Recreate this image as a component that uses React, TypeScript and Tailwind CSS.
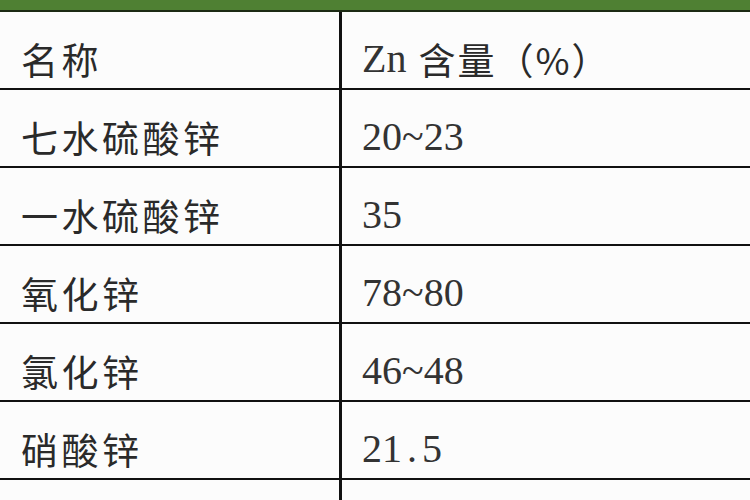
import * as React from 'react'

type Row = { name: string; value: React.ReactNode }

const rows: Row[] = [
  { name: '七水硫酸锌', value: '20~23' },
  { name: '一水硫酸锌', value: '35' },
  { name: '氧化锌', value: '78~80' },
  { name: '氯化锌', value: '46~48' },
  {
    name: '硝酸锌',
    value: (
      <>
        21<span className="inline-block w-[0.5em] text-center">.</span>5
      </>
    ),
  },
  { name: '醋酸锌', value: '' },
]

const cjk = "font-['Noto_Sans_CJK_SC',sans-serif]"
const num = "font-['Liberation_Serif','Noto_Sans_CJK_SC',serif]"

function TableRow({ left, right }: { left: React.ReactNode; right: React.ReactNode }) {
  return (
    <div className="flex h-[78px] shrink-0 border-b-2 border-[#111]">
      <div
        className={`flex w-[342px] shrink-0 items-center border-r-[3px] border-[#111] pl-[21px] pt-[18px] text-[37px] leading-none tracking-[3.5px] text-[#2a2a2a] ${cjk}`}
      >
        {left}
      </div>
      <div className="flex flex-1 items-center pl-[20px] pt-[18px] text-[40px] leading-none text-[#333]">
        {right}
      </div>
    </div>
  )
}

export default function App() {
  return (
    <div className="flex h-[500px] w-[750px] flex-col overflow-hidden bg-[#fcfcfc]">
      <div className="h-[10px] shrink-0 bg-[#4f8033]" />
      <div className="h-[2px] shrink-0 bg-[#1c2a14]" />
      <TableRow
        left="名称"
        right={
          <span className={`${num} flex items-center`}>
            Zn
            <span className={`${cjk} ml-[12px] text-[37px] tracking-[2px] text-[#2a2a2a]`}>含量（%）</span>
          </span>
        }
      />
      {rows.map((r) => (
        <TableRow key={r.name} left={r.name} right={<span className={num}>{r.value}</span>} />
      ))}
    </div>
  )
}
